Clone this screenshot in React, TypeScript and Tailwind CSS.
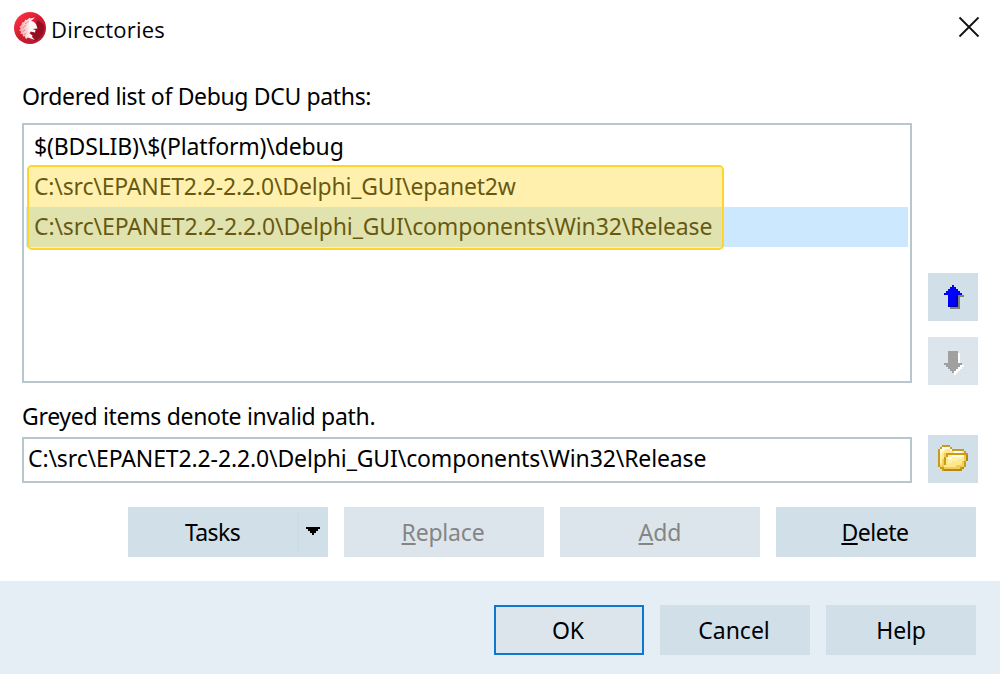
import type { ReactNode } from "react";

const palette: Record<string, string> = {
  o: "#c99a1b",
  d: "#b98612",
  w: "#fffbe8",
  l: "#fff3a8",
  y: "#ffe88a",
  g: "#f0cf58",
  b: "#0000ff",
  n: "#0000b4",
  s: "#808080",
  a: "#a0a0a0",
  x: "#ffffff",
};

const folderPixels = [
  "..oooo.........",
  ".owwwwo........",
  "owwlyywoooooo..",
  "owlyyyyywwwwyo.",
  "olygooooooooooo",
  "olygollwwwwwwgd",
  "olyoywwlllllygd",
  "olgoylllllyyygd",
  "olgoyllyyyyygo.",
  "oygoyyyyyyyygo.",
  "oggyyyyyyggggo.",
  ".ooggggggggod..",
  "..oddddddddd...",
];

const upPixels = [
  "....b.....",
  "...bbb....",
  "..bbbbb...",
  ".bbbbbbb..",
  "bbbbbbbbb.",
  "..bbbbnsss",
  "..bbbbns..",
  "..bbbbns..",
  "..bbbbns..",
  "..bbbbns..",
  "..nnnnns..",
  "...sssss..",
];

const downPixels = [
  "..aaaaa...",
  "..aaaaax..",
  "..aaaaax..",
  "..aaaaax..",
  "..aaaaax..",
  "..aaaaax..",
  "aaaaaaaaa.",
  ".aaaaaaaxx",
  "..aaaaaxx.",
  "...aaaxx..",
  "....axx...",
  ".....x....",
];

function PixelIcon({ rows }: { rows: string[] }) {
  return (
    <svg
      width={rows[0].length * 2}
      height={rows.length * 2}
      viewBox={`0 0 ${rows[0].length} ${rows.length}`}
      shapeRendering="crispEdges"
    >
      {rows.flatMap((row, y) =>
        row.split("").map((c, x) =>
          palette[c] ? <rect key={`${x}-${y}`} x={x} y={y} width="1" height="1" fill={palette[c]} /> : null,
        ),
      )}
    </svg>
  );
}

function Logo() {
  return (
    <svg width="32" height="32" viewBox="0 0 32 32">
      <defs>
        <linearGradient id="disc" x1="0.15" y1="0.1" x2="0.85" y2="0.9">
          <stop offset="0" stopColor="#fa3040" />
          <stop offset="0.5" stopColor="#cf1a2e" />
          <stop offset="1" stopColor="#b51a34" />
        </linearGradient>
        <linearGradient id="crest" x1="0" y1="0" x2="1" y2="0">
          <stop offset="0" stopColor="#ee9aa0" />
          <stop offset="0.6" stopColor="#fff6f6" />
        </linearGradient>
        <filter id="soft" x="-10%" y="-10%" width="120%" height="120%">
          <feGaussianBlur stdDeviation="0.5" />
        </filter>
      </defs>
      <circle cx="16" cy="16" r="16" fill="url(#disc)" />
      <g filter="url(#soft)">
        <path d="M24 8 L30 13 A14 14 0 0 1 20 29 L17 21Z" fill="#940d22" />
        <path
          d="M21 5.500 L16.500 6.500 L15.500 5.800 L13 8 L11.500 7.500 L10 10 L8 10.500 L7.500 13 L5.500 14.500 L6.500 16.500 L5 18.500 L7 19.500 L6.500 22 L8.500 22 L9 24.500 L10.500 24 L12 27 L14 25.500 L21 28 L18 25 L18.500 23.500 L15.500 21.500 L16.500 19.500 L21 20.500 L21.500 18 L18.500 17 L23.500 16.500 L22 12 L19.500 9.500 L17 9Z"
          fill="url(#crest)"
        />
        <path d="M15 9 L11 12 M12 13 L9 16 M11.500 18 L8.500 19.500 M12.500 21 L10 23" stroke="#e77982" strokeWidth="0.8" />
      </g>
    </svg>
  );
}

function Button({ children, className }: { children: ReactNode; className: string }) {
  return <button className={`flex h-[50px] items-center justify-center pb-px ${className}`}>{children}</button>;
}

export default function App() {
  return (
    <div className="flex h-[674px] w-[1000px] flex-col overflow-hidden bg-white font-['Noto_Sans',sans-serif] text-[23px] leading-[40px] whitespace-nowrap text-black">
      <header className="flex h-[60px] shrink-0 items-start justify-between pt-3 pr-5 pl-3.5">
        <div className="flex items-center">
          <Logo />
          <h1 className="ml-[5px] h-8 font-['Open_Sans',sans-serif] text-[22px] leading-[34px] tracking-[0.18px]">Directories</h1>
        </div>
        <svg className="mt-1" width="22" height="22" viewBox="0 0 22 22" stroke="#111" strokeWidth="1.8">
          <path d="M1.500 1.500 L20.500 20.500 M20.500 1.500 L1.500 20.500" />
        </svg>
      </header>

      <main className="flex h-[521px] shrink-0 flex-col pl-[22px]">
        <div className="mt-4 h-[47px] shrink-0">
          <span className="tracking-[-0.35px]">Ordered list of Debug DCU paths:</span>
        </div>
        <div className="flex gap-4">
          <div className="relative h-[260px] w-[890px] border-2 border-[#b8c6ce] px-0.5 pt-0.5">
            <div className="h-10 pl-2 leading-[38px]"><span className="tracking-[-0.15px]">$(BDSLIB)\$(Platform)\debug</span></div>
            <div className="h-10 pl-2 leading-[38px]"><span className="tracking-[-0.18px]">C:\src\EPANET2.2-2.2.0\Delphi_GUI\epanet2w</span></div>
            <div className="h-10 bg-[#cce8ff] pl-2 leading-[38px]"><span className="tracking-[-0.13px]">C:\src\EPANET2.2-2.2.0\Delphi_GUI\components\Win32\Release</span></div>
            <div className="absolute top-10 left-[3px] h-[85px] w-[697px] rounded-[5px] border-2 border-[#ffd52b] bg-[#ffdc32]/40" />
          </div>
          <div className="flex flex-col gap-4 pt-[150px]">
            <button className="flex h-12 w-[50px] items-center justify-center bg-[#d1dfe9] pl-0.5"><PixelIcon rows={upPixels} /></button>
            <button className="flex h-12 w-[50px] items-center justify-center bg-[#dde5ec] pt-1 pl-0.5"><PixelIcon rows={downPixels} /></button>
          </div>
        </div>
        <div className="mt-3 h-[38px] shrink-0 leading-[38px]"><span className="tracking-[-0.32px]">Greyed items denote invalid path.</span></div>
        <div className="flex items-start gap-4">
          <div className="mt-0.5 h-[46px] w-[890px] border-2 border-[#b8c6ce] pl-1 leading-[39px]">
            <span className="tracking-[-0.13px]">C:\src\EPANET2.2-2.2.0\Delphi_GUI\components\Win32\Release</span>
          </div>
          <button className="flex h-12 w-[50px] items-center justify-center bg-[#d1dfe9] pb-0.5"><PixelIcon rows={folderPixels} /></button>
        </div>
        <div className="mt-6 flex gap-4 pl-[106px]">
          <Button className="w-[200px] bg-[#d1dfe9]">
            <span className="flex-1 text-center tracking-[-0.6px]">Tasks</span>
            <span className="flex h-10 w-[31px] items-center justify-center border-l-2 border-[#cbddea] pr-0.5 pb-0.5">
              <svg width="14" height="8" viewBox="0 0 14 8" shapeRendering="crispEdges"><path d="M0 0H14V2H12V4H10V6H8V8H6V6H4V4H2V2H0Z" /></svg>
            </span>
          </Button>
          <Button className="w-[200px] bg-[#dde5ec] pr-0.5 text-[#858585]"><span className="tracking-[-0.2px]"><u className="decoration-2 underline-offset-2">R</u>eplace</span></Button>
          <Button className="w-[200px] bg-[#dde5ec] text-[#858585]"><span><u className="decoration-2 underline-offset-2">A</u>dd</span></Button>
          <Button className="w-[200px] bg-[#d1dfe9] pr-0.5"><span className="tracking-[-0.45px]"><u className="decoration-2 underline-offset-2">D</u>elete</span></Button>
        </div>
      </main>

      <footer className="flex h-[93px] shrink-0 justify-end gap-4 bg-[#e5edf5] pt-6 pr-6">
        <Button className="w-[150px] border-2 border-[#0e78d1] bg-[#dde5ec] pr-0.5"><span>OK</span></Button>
        <Button className="w-[150px] bg-[#d1dfe9] pr-0.5"><span>Cancel</span></Button>
        <Button className="w-[150px] bg-[#d1dfe9]"><span className="tracking-[-0.2px]">Help</span></Button>
      </footer>
    </div>
  );
}
